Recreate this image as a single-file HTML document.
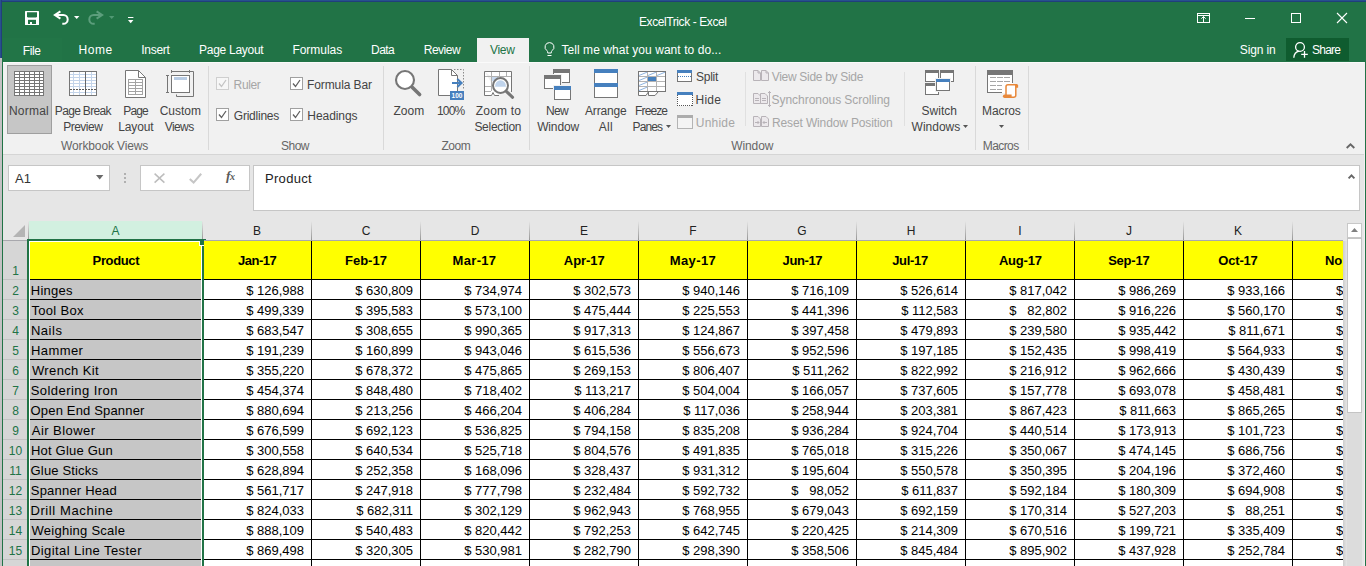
<!DOCTYPE html>
<html lang="en"><head><meta charset="utf-8"><title>ExcelTrick - Excel</title>
<style>
html,body{margin:0;padding:0;}
body{width:1366px;height:566px;overflow:hidden;position:relative;background:#217346;font-family:"Liberation Sans", sans-serif;}
.a{position:absolute;box-sizing:border-box;}
.t{white-space:pre;}
svg{overflow:visible;display:block;}
</style></head><body>
<div class="a" style="left:0px;top:0px;width:1366px;height:1px;background:#27508e;"></div>
<div class="a" style="left:0px;top:1px;width:1366px;height:1px;background:#203f7b;"></div>
<div class="a" style="left:0px;top:0px;width:1px;height:58px;background:#27508e;"></div>
<div class="a" style="left:1px;top:0px;width:1px;height:58px;background:#213f7c;"></div>
<div class="a" style="left:0px;top:58px;width:2px;height:508px;background:#c3c1c3;"></div>
<svg class="a" style="left:25px;top:11px;" width="14" height="14" viewBox="0 0 14 14"><rect x="0" y="0" width="14" height="14" rx="0.6" fill="#fff"/><path d="M2 1.2H12V5.6L11.2 6.5H2.8L2 5.6z" fill="#217346"/><rect x="3" y="8.8" width="8" height="4.2" fill="#217346"/><rect x="5" y="11" width="2" height="2" fill="#fff"/></svg>
<svg class="a" style="left:54px;top:11px;" width="15" height="14" viewBox="0 0 15 14"><path d="M6.4 0.4L0.9 4L6.4 7.6" fill="none" stroke="#fff" stroke-width="2" stroke-linejoin="miter"/><path d="M1.2 4H9.3A4.4 4.4 0 0 1 9.3 12.8H8.3" fill="none" stroke="#fff" stroke-width="2"/></svg>
<svg class="a" style="left:74px;top:16px;" width="6" height="3" viewBox="0 0 6 3"><path d="M0 0h5.4L2.7 3.1z" fill="#fff"/></svg>
<svg class="a" style="left:89px;top:11px;" width="15" height="14" viewBox="0 0 15 14"><path d="M7.6 0.4L13.1 4L7.6 7.6" fill="none" stroke="#5c9e7c" stroke-width="2"/><path d="M12.8 4H4.7A4.4 4.4 0 0 0 4.7 12.8H5.7" fill="none" stroke="#5c9e7c" stroke-width="2"/></svg>
<svg class="a" style="left:109px;top:16px;" width="6" height="3" viewBox="0 0 6 3"><path d="M0 0h5.4L2.7 3.1z" fill="#519873"/></svg>
<svg class="a" style="left:128px;top:17px;" width="6" height="7" viewBox="0 0 6 7"><rect x="0" y="0" width="5.4" height="1" fill="#fff"/><path d="M0 3h5.4L2.7 6.2z" fill="#fff"/></svg>
<div class="a t  fit" style="top:15px;font-size:12px;line-height:14px;color:#fff;letter-spacing:-0.41px;left:639.0px;">ExcelTrick - Excel</div>
<svg class="a" style="left:1197px;top:13px;" width="13" height="10" viewBox="0 0 13 10"><rect x="0.5" y="0.5" width="12" height="9" fill="none" stroke="#fff"/><path d="M0 2.5h13" stroke="#fff"/><path d="M6.5 9V3.5M4.3 5.7L6.5 3.5L8.7 5.7" fill="none" stroke="#fff"/></svg>
<div class="a" style="left:1245px;top:18px;width:10px;height:1px;background:#fff;"></div>
<svg class="a" style="left:1291px;top:13px;" width="10" height="10" viewBox="0 0 10 10"><rect x="0.5" y="0.5" width="9" height="9" fill="none" stroke="#fff"/></svg>
<svg class="a" style="left:1337px;top:13px;" width="10" height="10" viewBox="0 0 10 10"><path d="M0 0L10 10M10 0L0 10" stroke="#fff" stroke-width="1.1"/></svg>
<div class="a" style="left:3px;top:38px;width:59px;height:24px;background:#227547;"></div>
<div class="a t  fit" style="top:44px;font-size:12px;line-height:14px;color:#fff;letter-spacing:-0.37px;left:22.75px;">File</div>
<div class="a t  fit" style="top:43px;font-size:12px;line-height:14px;color:#fff;letter-spacing:0.53px;left:78.6px;">Home</div>
<div class="a t  fit" style="top:43px;font-size:12px;line-height:14px;color:#fff;letter-spacing:-0.28px;left:141.3px;">Insert</div>
<div class="a t  fit" style="top:43px;font-size:12px;line-height:14px;color:#fff;letter-spacing:-0.28px;left:199.1px;">Page Layout</div>
<div class="a t  fit" style="top:43px;font-size:12px;line-height:14px;color:#fff;letter-spacing:-0.04px;left:292.45px;">Formulas</div>
<div class="a t  fit" style="top:43px;font-size:12px;line-height:14px;color:#fff;letter-spacing:-0.6px;left:371.1px;">Data</div>
<div class="a t  fit" style="top:43px;font-size:12px;line-height:14px;color:#fff;letter-spacing:-0.5px;left:423.75px;">Review</div>
<div class="a" style="left:477px;top:38px;width:52px;height:25px;background:#f1f1f1;"></div>
<div class="a t  fit" style="top:43px;font-size:12px;line-height:14px;color:#217346;letter-spacing:-0.33px;left:490.0px;">View</div>
<svg class="a" style="left:544px;top:42px;" width="11" height="15" viewBox="0 0 11 15"><path d="M5.5 0.6a4.4 4.4 0 0 1 2.6 8c-0.6 0.5 -0.8 1 -0.8 2.4h-3.6c0 -1.4 -0.2 -1.9 -0.8 -2.4a4.4 4.4 0 0 1 2.6 -8z" fill="none" stroke="#fff" stroke-width="1"/><path d="M3.5 13.5h4" stroke="#fff" stroke-width="1"/></svg>
<div class="a t  fit" style="top:43px;font-size:12px;line-height:14px;color:#fff;letter-spacing:0.06px;left:561.45px;">Tell me what you want to do...</div>
<div class="a t  fit" style="top:43px;font-size:12px;line-height:14px;color:#fff;letter-spacing:-0.15px;left:1239.85px;">Sign in</div>
<div class="a" style="left:1286px;top:38px;width:63px;height:23px;background:#0f5c2f;"></div>
<svg class="a" style="left:1293px;top:42px;" width="15" height="16" viewBox="0 0 15 16"><circle cx="7" cy="5" r="4.4" fill="none" stroke="#fff" stroke-width="1.3"/><path d="M0.8 15.8C1 12.2 3 9.8 6.2 9.2" fill="none" stroke="#fff" stroke-width="1.3"/><path d="M11.5 9V15.8M8.2 12.4H14.8" stroke="#fff" stroke-width="1.3"/></svg>
<div class="a t  fit" style="top:43px;font-size:12px;line-height:14px;color:#fff;letter-spacing:-0.75px;left:1312.0px;">Share</div>
<div class="a" style="left:3px;top:62px;width:1362px;height:92px;background:#f1f1f1;"></div>
<div class="a" style="left:3px;top:62px;width:1362px;height:1px;background:#fafafa;"></div>
<div class="a" style="left:3px;top:154px;width:1362px;height:1px;background:#d5d5d5;"></div>
<div class="a" style="left:3px;top:155px;width:1362px;height:411px;background:#e6e6e6;"></div>
<div class="a" style="left:1364px;top:62px;width:1px;height:504px;background:#f3eff1;"></div>
<div class="a" style="left:8px;top:165px;width:102px;height:26px;background:#fff;border:1px solid #c6c6c6;"></div>
<div class="a t " style="top:171px;font-size:13px;line-height:15px;color:#333;left:15px;">A1</div>
<svg class="a" style="left:96px;top:175px;" width="8" height="5" viewBox="0 0 8 5"><path d="M0 0h7.4L3.7 4.4z" fill="#6a6a6a"/></svg>
<div class="a" style="left:124px;top:173px;width:2px;height:2px;background:#b0b0b0;"></div>
<div class="a" style="left:124px;top:177px;width:2px;height:2px;background:#b0b0b0;"></div>
<div class="a" style="left:124px;top:181px;width:2px;height:2px;background:#b0b0b0;"></div>
<div class="a" style="left:140px;top:165px;width:110px;height:26px;background:#fff;border:1px solid #c6c6c6;"></div>
<svg class="a" style="left:154px;top:173px;" width="11" height="10" viewBox="0 0 11 10"><path d="M0.6 0.6L10.4 9.6M10.4 0.6L0.6 9.6" stroke="#bdbdbd" stroke-width="1.5"/></svg>
<svg class="a" style="left:189px;top:173px;" width="13" height="11" viewBox="0 0 13 11"><path d="M0.8 6L4.6 9.6L12.2 0.8" fill="none" stroke="#c6c6c6" stroke-width="2.1"/></svg>
<div class="a t" style="left:226px;top:168px;font-family:'Liberation Serif',serif;font-style:italic;font-weight:bold;font-size:13.5px;line-height:16px;color:#5a5a5a;">f<span style="font-size:10px;margin-left:-0.5px;">x</span></div>
<div class="a" style="left:253px;top:165px;width:1107px;height:46px;background:#fff;border:1px solid #c6c6c6;"></div>
<div class="a t " style="top:171px;font-size:13px;line-height:15px;color:#222;letter-spacing:0.3px;left:265px;">Product</div>
<svg class="a" style="left:1348px;top:174px;" width="7" height="5" viewBox="0 0 7 5"><path d="M0.6 4.3L3.5 1.3L6.4 4.3" fill="none" stroke="#666" stroke-width="1.9"/></svg>
<svg class="a" style="left:1346px;top:143px;" width="9" height="6" viewBox="0 0 9 6"><path d="M0.7 5L4.5 1.3L8.3 5" fill="none" stroke="#666" stroke-width="1.9"/></svg>
<div class="a" style="left:208px;top:66px;width:1px;height:84px;background:#d9d9d9;"></div>
<div class="a" style="left:383px;top:66px;width:1px;height:84px;background:#d9d9d9;"></div>
<div class="a" style="left:529px;top:66px;width:1px;height:84px;background:#d9d9d9;"></div>
<div class="a" style="left:975px;top:66px;width:1px;height:84px;background:#d9d9d9;"></div>
<div class="a" style="left:1028px;top:66px;width:1px;height:84px;background:#d9d9d9;"></div>
<div class="a" style="left:745px;top:72px;width:1px;height:54px;background:#e0e0e0;"></div>
<div class="a" style="left:904px;top:72px;width:1px;height:54px;background:#e0e0e0;"></div>
<div class="a" style="left:7px;top:65px;width:45px;height:69px;background:#c6c6c6;border:1px solid #9f9f9f;"></div>
<svg class="a" style="left:14px;top:71px;" width="30" height="25" viewBox="0 0 30 25"><rect x="0" y="0" width="30" height="25" fill="#767676"/><rect x="1" y="1" width="4" height="2" fill="#fff"/><rect x="6" y="1" width="4" height="2" fill="#fff"/><rect x="11" y="1" width="4" height="2" fill="#fff"/><rect x="16" y="1" width="4" height="2" fill="#fff"/><rect x="21" y="1" width="4" height="2" fill="#fff"/><rect x="26" y="1" width="3" height="2" fill="#fff"/><rect x="1" y="4" width="4" height="2" fill="#fff"/><rect x="6" y="4" width="4" height="2" fill="#fff"/><rect x="11" y="4" width="4" height="2" fill="#fff"/><rect x="16" y="4" width="4" height="2" fill="#fff"/><rect x="21" y="4" width="4" height="2" fill="#fff"/><rect x="26" y="4" width="3" height="2" fill="#fff"/><rect x="1" y="7" width="4" height="2" fill="#fff"/><rect x="6" y="7" width="4" height="2" fill="#fff"/><rect x="11" y="7" width="4" height="2" fill="#fff"/><rect x="16" y="7" width="4" height="2" fill="#fff"/><rect x="21" y="7" width="4" height="2" fill="#fff"/><rect x="26" y="7" width="3" height="2" fill="#fff"/><rect x="1" y="10" width="4" height="2" fill="#fff"/><rect x="6" y="10" width="4" height="2" fill="#fff"/><rect x="11" y="10" width="4" height="2" fill="#fff"/><rect x="16" y="10" width="4" height="2" fill="#fff"/><rect x="21" y="10" width="4" height="2" fill="#fff"/><rect x="26" y="10" width="3" height="2" fill="#fff"/><rect x="1" y="13" width="4" height="2" fill="#fff"/><rect x="6" y="13" width="4" height="2" fill="#fff"/><rect x="11" y="13" width="4" height="2" fill="#fff"/><rect x="16" y="13" width="4" height="2" fill="#fff"/><rect x="21" y="13" width="4" height="2" fill="#fff"/><rect x="26" y="13" width="3" height="2" fill="#fff"/><rect x="1" y="16" width="4" height="2" fill="#fff"/><rect x="6" y="16" width="4" height="2" fill="#fff"/><rect x="11" y="16" width="4" height="2" fill="#fff"/><rect x="16" y="16" width="4" height="2" fill="#fff"/><rect x="21" y="16" width="4" height="2" fill="#fff"/><rect x="26" y="16" width="3" height="2" fill="#fff"/><rect x="1" y="19" width="4" height="2" fill="#fff"/><rect x="6" y="19" width="4" height="2" fill="#fff"/><rect x="11" y="19" width="4" height="2" fill="#fff"/><rect x="16" y="19" width="4" height="2" fill="#fff"/><rect x="21" y="19" width="4" height="2" fill="#fff"/><rect x="26" y="19" width="3" height="2" fill="#fff"/><rect x="1" y="22" width="4" height="2" fill="#fff"/><rect x="6" y="22" width="4" height="2" fill="#fff"/><rect x="11" y="22" width="4" height="2" fill="#fff"/><rect x="16" y="22" width="4" height="2" fill="#fff"/><rect x="21" y="22" width="4" height="2" fill="#fff"/><rect x="26" y="22" width="3" height="2" fill="#fff"/></svg>
<svg class="a" style="left:69px;top:71px;" width="28" height="25" viewBox="0 0 28 25"><rect x="0.5" y="0.5" width="27" height="24" fill="#fff" stroke="#767676"/><rect x="1" y="3" width="26" height="1" fill="#c3d4ea"/><rect x="1" y="6" width="26" height="1" fill="#c3d4ea"/><rect x="1" y="9" width="26" height="1" fill="#c3d4ea"/><rect x="1" y="12" width="26" height="1" fill="#c3d4ea"/><rect x="1" y="15" width="26" height="1" fill="#c3d4ea"/><rect x="1" y="21" width="26" height="1" fill="#c3d4ea"/><rect x="4" y="1" width="1" height="23" fill="#c3d4ea"/><rect x="10" y="1" width="1" height="23" fill="#c3d4ea"/><rect x="22" y="1" width="1" height="23" fill="#c3d4ea"/><rect x="16" y="1" width="1" height="23" fill="#666"/><path d="M1 18.5h26" stroke="#5a5a5a" stroke-width="1" stroke-dasharray="2 1"/></svg>
<svg class="a" style="left:125px;top:70px;" width="21" height="28" viewBox="0 0 21 28"><path d="M0.5 0.5H13.5L20.5 7.5V27.5H0.5z" fill="#fff" stroke="#767676"/><path d="M13.5 0.5V7.5H20.5" fill="none" stroke="#767676"/><rect x="3.5" y="9.5" width="14" height="15" fill="#fff" stroke="#a3a3a3"/><path d="M3.5 12.5h14" stroke="#a3a3a3"/><path d="M3.5 15.5h14" stroke="#a3a3a3"/><path d="M3.5 18.5h14" stroke="#a3a3a3"/><path d="M3.5 21.5h14" stroke="#a3a3a3"/><path d="M10.5 9.5v15" stroke="#a3a3a3"/></svg>
<svg class="a" style="left:167px;top:71px;" width="27" height="26" viewBox="0 0 27 26"><path d="M9.5 25.5V23.5M9.5 25.5H26.5V0.5H23" fill="none" stroke="#767676"/><rect x="4.5" y="4.5" width="18" height="17" fill="#fff" stroke="#767676"/><rect x="7" y="6" width="13" height="3" fill="#b8cce4"/><path d="M4.5 0.5H22.5M4.5 -1v3M22.5 -1v3" stroke="#767676" fill="none"/><path d="M0.5 4.5V21.5M-1 4.5h3M-1 21.5h3" stroke="#767676" fill="none"/></svg>
<div class="a t  fit" style="top:104px;font-size:12px;line-height:14px;color:#444;letter-spacing:0.24px;left:8.9px;">Normal</div>
<div class="a t  fit" style="top:104px;font-size:12px;line-height:14px;color:#444;letter-spacing:-0.68px;left:54.85px;">Page Break</div>
<div class="a t  fit" style="top:120px;font-size:12px;line-height:14px;color:#444;letter-spacing:-0.5px;left:63.2px;">Preview</div>
<div class="a t  fit" style="top:104px;font-size:12px;line-height:14px;color:#444;letter-spacing:-0.9px;left:123.3px;">Page</div>
<div class="a t  fit" style="top:120px;font-size:12px;line-height:14px;color:#444;letter-spacing:-0.12px;left:118.2px;">Layout</div>
<div class="a t  fit" style="top:104px;font-size:12px;line-height:14px;color:#444;letter-spacing:-0.02px;left:159.65px;">Custom</div>
<div class="a t  fit" style="top:120px;font-size:12px;line-height:14px;color:#444;letter-spacing:-0.6px;left:164.8px;">Views</div>
<div class="a t  fit" style="top:139px;font-size:12px;line-height:14px;color:#666;letter-spacing:-0.13px;left:61.05px;">Workbook Views</div>
<svg class="a" style="left:216px;top:77px;" width="13" height="13" viewBox="0 0 13 13"><rect x="0.5" y="0.5" width="12" height="12" fill="#f7f7f7" stroke="#cfcfcf"/><path d="M3 6.5L5.5 9.5L10 3" fill="none" stroke="#c4c4c4" stroke-width="1.3"/></svg>
<svg class="a" style="left:290px;top:77px;" width="13" height="13" viewBox="0 0 13 13"><rect x="0.5" y="0.5" width="12" height="12" fill="#fff" stroke="#a0a0a0"/><path d="M3 6.5L5.5 9.5L10 3" fill="none" stroke="#606060" stroke-width="1.3"/></svg>
<svg class="a" style="left:216px;top:108px;" width="13" height="13" viewBox="0 0 13 13"><rect x="0.5" y="0.5" width="12" height="12" fill="#fff" stroke="#a0a0a0"/><path d="M3 6.5L5.5 9.5L10 3" fill="none" stroke="#606060" stroke-width="1.3"/></svg>
<svg class="a" style="left:290px;top:108px;" width="13" height="13" viewBox="0 0 13 13"><rect x="0.5" y="0.5" width="12" height="12" fill="#fff" stroke="#a0a0a0"/><path d="M3 6.5L5.5 9.5L10 3" fill="none" stroke="#606060" stroke-width="1.3"/></svg>
<div class="a t  fit" style="top:78px;font-size:12px;line-height:14px;color:#a6a6a6;letter-spacing:-0.35px;left:233.6px;">Ruler</div>
<div class="a t  fit" style="top:78px;font-size:12px;line-height:14px;color:#444;letter-spacing:-0.1px;left:307.0px;">Formula Bar</div>
<div class="a t  fit" style="top:109px;font-size:12px;line-height:14px;color:#444;letter-spacing:-0.24px;left:233.85px;">Gridlines</div>
<div class="a t  fit" style="top:109px;font-size:12px;line-height:14px;color:#444;letter-spacing:-0.06px;left:307.3px;">Headings</div>
<div class="a t  fit" style="top:139px;font-size:12px;line-height:14px;color:#666;letter-spacing:-0.47px;left:280.9px;">Show</div>
<svg class="a" style="left:395px;top:70px;" width="28" height="28" viewBox="0 0 28 28"><circle cx="10" cy="10" r="9" fill="#fff" stroke="#767676" stroke-width="2.1"/><path d="M17.2 17.2L24.6 24.6" stroke="#767676" stroke-width="3.6" stroke-linecap="round"/></svg>
<svg class="a" style="left:438px;top:69px;" width="27" height="31" viewBox="0 0 27 31"><path d="M0.5 0.5H13.5L19.5 6.5V26.5H0.5z" fill="#fff" stroke="#767676"/><path d="M13.5 0.5V6.5H19.5" fill="none" stroke="#767676"/><path d="M16 0.5H25.5V21" fill="none" stroke="#8a8a8a" stroke-dasharray="1.5 1.5"/><path d="M14 14H23.5M19.3 10L23.6 14L19.3 18" fill="none" stroke="#4680be" stroke-width="2"/><rect x="12" y="22" width="14" height="9" fill="#4680be"/><text x="19" y="29.2" font-family="Liberation Sans, sans-serif" font-size="6.5" font-weight="bold" fill="#fff" text-anchor="middle">100</text></svg>
<svg class="a" style="left:484px;top:71px;" width="30" height="28" viewBox="0 0 30 28"><path d="M0.5 0.5H27.5V21M0.5 0.5V24.5H7.5L9 21.5L10.5 24.5H15" fill="#fff" stroke="#767676"/><path d="M1 5.5H27M1 15.5H7M1 20.5H7M7.5 1V20M15.5 1V5M22.5 1V5" fill="none" stroke="#b0b0b0"/><path d="M8 6h6v4h-6z" fill="#c7d8ee"/><circle cx="16.5" cy="14.5" r="7.5" fill="#fff" stroke="#767676" stroke-width="2"/><path d="M11 15.7a5.5 6.5 0 0 1 11 0z" fill="#c0d4ec"/><path d="M22.3 20.3L28.6 26.3" stroke="#767676" stroke-width="3" stroke-linecap="round"/></svg>
<div class="a t  fit" style="top:104px;font-size:12px;line-height:14px;color:#444;letter-spacing:-0.03px;left:393.55px;">Zoom</div>
<div class="a t  fit" style="top:104px;font-size:12px;line-height:14px;color:#444;letter-spacing:-0.9px;left:437.1px;">100%</div>
<div class="a t  fit" style="top:104px;font-size:12px;line-height:14px;color:#444;letter-spacing:0.18px;left:475.85px;">Zoom to</div>
<div class="a t  fit" style="top:120px;font-size:12px;line-height:14px;color:#444;letter-spacing:-0.28px;left:474.4px;">Selection</div>
<div class="a t  fit" style="top:139px;font-size:12px;line-height:14px;color:#666;letter-spacing:-0.43px;left:441.45px;">Zoom</div>
<svg class="a" style="left:544px;top:69px;" width="28" height="31" viewBox="0 0 28 31"><rect x="9.5" y="0.5" width="16" height="13" fill="#fff" stroke="#767676"/><rect x="9" y="0" width="17" height="4" fill="#767676"/><rect x="-1" y="5" width="19" height="16" fill="#f1f1f1"/><rect x="0.5" y="6.5" width="16" height="13" fill="#fff" stroke="#767676"/><rect x="0" y="6" width="17" height="4" fill="#767676"/><rect x="9" y="16" width="19" height="16" fill="#f1f1f1"/><rect x="10.5" y="17.5" width="16" height="13" fill="#fff" stroke="#767676"/><rect x="10" y="17" width="17" height="4" fill="#4680be"/></svg>
<svg class="a" style="left:594px;top:69px;" width="24" height="29" viewBox="0 0 24 29"><rect x="0.5" y="0.5" width="23" height="28" fill="#fff" stroke="#767676"/><rect x="0" y="0" width="24" height="4" fill="#4680be"/><rect x="0" y="14" width="24" height="4" fill="#4680be"/></svg>
<svg class="a" style="left:638px;top:71px;" width="28" height="25" viewBox="0 0 28 25"><path d="M0.5 20.5V24.5H8L10.3 21M10.5 21V24.5H17L20 21" fill="#fff" stroke="#767676"/><rect x="0.5" y="0.5" width="27" height="20" fill="#fff" stroke="#767676"/><path d="M1 5.5H27M1 10.5H27M1 15.5H27M9.5 1V20M18.5 1V20" fill="none" stroke="#b4b4b4"/><path d="M1 4.5L9 1.2M10 4.5L18 1.2M19 4.5L27 1.2M1 9.5L9 6.2M1 14.5L9 11.2M1 19.5L9 16.2" stroke="#8fb4e0" fill="none" stroke-width="1"/><rect x="10" y="6" width="8" height="4" fill="#4680be"/></svg>
<div class="a t  fit" style="top:104px;font-size:12px;line-height:14px;color:#444;letter-spacing:-0.7px;left:546.0px;">New</div>
<div class="a t  fit" style="top:120px;font-size:12px;line-height:14px;color:#444;letter-spacing:-0.14px;left:537.15px;">Window</div>
<div class="a t  fit" style="top:104px;font-size:12px;line-height:14px;color:#444;letter-spacing:-0.17px;left:585.0px;">Arrange</div>
<div class="a t  fit" style="top:120px;font-size:12px;line-height:14px;color:#444;letter-spacing:0.25px;left:598.75px;">All</div>
<div class="a t  fit" style="top:104px;font-size:12px;line-height:14px;color:#444;letter-spacing:-0.88px;left:635.1px;">Freeze</div>
<div class="a t  fit" style="top:120px;font-size:12px;line-height:14px;color:#444;letter-spacing:-0.9px;left:632.6px;">Panes</div>
<svg class="a" style="left:666px;top:125px;" width="5" height="3" viewBox="0 0 5 3"><path d="M0 0h5L2.5 3z" fill="#555"/></svg>
<svg class="a" style="left:677px;top:70px;" width="15" height="12" viewBox="0 0 15 12"><rect x="0.5" y="0.5" width="14" height="11" fill="#fff" stroke="#767676"/><rect x="0" y="0" width="15" height="3" fill="#4680be"/><path d="M1 6.5h13" stroke="#4680be" stroke-dasharray="1 1"/></svg>
<svg class="a" style="left:677px;top:92px;" width="16" height="14" viewBox="0 0 16 14"><rect x="0" y="0" width="16" height="14" fill="#fff"/><path d="M0.5 3V14M15.5 3V14M0 13.5H16" fill="none" stroke="#555" stroke-dasharray="1 1"/><rect x="0" y="0" width="16" height="3" fill="#4680be"/></svg>
<svg class="a" style="left:677px;top:115px;" width="16" height="14" viewBox="0 0 16 14"><rect x="0.5" y="0.5" width="15" height="13" fill="#f4f4f4" stroke="#b4b4b4"/><rect x="0" y="0" width="16" height="3" fill="#acacac"/></svg>
<div class="a t  fit" style="top:70px;font-size:12px;line-height:14px;color:#444;letter-spacing:-0.25px;left:696.0px;">Split</div>
<div class="a t  fit" style="top:93px;font-size:12px;line-height:14px;color:#444;letter-spacing:0.2px;left:695.6px;">Hide</div>
<div class="a t  fit" style="top:116px;font-size:12px;line-height:14px;color:#a6a6a6;letter-spacing:0.2px;left:695.8px;">Unhide</div>
<svg class="a" style="left:753px;top:70px;" width="16" height="11" viewBox="0 0 16 11"><path d="M0.5 0.5H5L7.5 3V10.5H0.5zM8.5 0.5H13L15.5 3V10.5H8.5z" fill="#ece9ec" stroke="#b8b3b8"/><path d="M5 0.5V3H7.5M13 0.5V3H15.5" fill="none" stroke="#b8b3b8"/></svg>
<svg class="a" style="left:753px;top:91px;" width="18" height="16" viewBox="0 0 18 16"><path d="M0.5 2.5H5L7.5 5V12.5H0.5zM7.5 2.5H12L14.5 5V12.5H7.5z" fill="#ece9ec" stroke="#b8b3b8"/><path d="M2 7.5h4M2 9.5h4M9 7.5h4M9 9.5h4" stroke="#b8b3b8"/><path d="M16.5 0V16M15 2L16.5 0.5L18 2M15 14L16.5 15.5L18 14" fill="none" stroke="#b8b3b8"/></svg>
<svg class="a" style="left:753px;top:116px;" width="16" height="11" viewBox="0 0 16 11"><path d="M0.5 0.5H5L7.5 3V10.5H0.5zM8.5 0.5H13L15.5 3V10.5H8.5z" fill="#ece9ec" stroke="#b8b3b8"/><path d="M2 6.5h4M4.5 5l1.5 1.5L4.5 8M14 6.5h-4M11.5 5L10 6.5L11.5 8" fill="none" stroke="#b8b3b8"/></svg>
<div class="a t  fit" style="top:70px;font-size:12px;line-height:14px;color:#a6a6a6;letter-spacing:-0.3px;left:771.7px;">View Side by Side</div>
<div class="a t  fit" style="top:93px;font-size:12px;line-height:14px;color:#a6a6a6;letter-spacing:-0.05px;left:771.6px;">Synchronous Scrolling</div>
<div class="a t  fit" style="top:116px;font-size:12px;line-height:14px;color:#a6a6a6;letter-spacing:-0.14px;left:772.05px;">Reset Window Position</div>
<svg class="a" style="left:925px;top:70px;" width="30" height="26" viewBox="0 0 30 26"><rect x="0.5" y="0.5" width="13" height="11" fill="#fff" stroke="#767676"/><rect x="0" y="0" width="14" height="3" fill="#767676"/><rect x="15.5" y="0.5" width="13" height="11" fill="#fff" stroke="#767676"/><rect x="15" y="0" width="14" height="3" fill="#767676"/><rect x="0.5" y="13.5" width="13" height="11" fill="#fff" stroke="#767676"/><rect x="0" y="13" width="14" height="3" fill="#767676"/><rect x="10" y="8" width="16" height="14" fill="#f1f1f1"/><rect x="11.5" y="9.5" width="13" height="11" fill="#fff" stroke="#767676"/><rect x="11" y="9" width="14" height="3" fill="#4680be"/></svg>
<div class="a t  fit" style="top:104px;font-size:12px;line-height:14px;color:#444;left:921.6px;">Switch</div>
<div class="a t  fit" style="top:120px;font-size:12px;line-height:14px;color:#444;left:911.6px;">Windows</div>
<svg class="a" style="left:963px;top:125px;" width="5" height="3" viewBox="0 0 5 3"><path d="M0 0h5L2.5 3z" fill="#555"/></svg>
<div class="a t  fit" style="top:139px;font-size:12px;line-height:14px;color:#666;letter-spacing:-0.1px;left:731.25px;">Window</div>
<svg class="a" style="left:987px;top:70px;" width="32" height="28" viewBox="0 0 32 28"><rect x="0.5" y="0.5" width="25" height="22" fill="#fff" stroke="#767676"/><rect x="0" y="0" width="26" height="5" fill="#767676"/><path d="M3 7.5h6M10 7.5h6M17 7.5h6" stroke="#a6a6a6"/><path d="M3 11.5h6M10 11.5h6M17 11.5h6" stroke="#a6a6a6"/><path d="M3 15.5h6M10 15.5h6M17 15.5h6" stroke="#a6a6a6"/><path d="M3 19.5h6M10 19.5h6M17 19.5h6" stroke="#a6a6a6"/><rect x="15" y="13" width="17" height="16" fill="#f1f1f1"/><rect x="15" y="13" width="11" height="10" fill="#fff"/><path d="M19 25V16.7Q19 14.7 21 14.7H28.8V25.3Q28.8 27.3 26.6 27.3H18" fill="#fff" stroke="#e8883a" stroke-width="1.5"/><path d="M28.6 14h1a1.5 1.5 0 0 1 1.5 1.5v2.3h-2.5z" fill="#e8883a"/><path d="M17.6 24.6H24.6v3.4H17.6a1.7 1.7 0 0 1 0 -3.4z" fill="#e8883a"/></svg>
<div class="a t  fit" style="top:104px;font-size:12px;line-height:14px;color:#444;letter-spacing:-0.12px;left:982.1px;">Macros</div>
<svg class="a" style="left:999px;top:125px;" width="5" height="3" viewBox="0 0 5 3"><path d="M0 0h5L2.5 3z" fill="#555"/></svg>
<div class="a t  fit" style="top:139px;font-size:12px;line-height:14px;color:#666;letter-spacing:-0.6px;left:982.8px;">Macros</div>
<div class="a" style="left:29px;top:241px;width:1314px;height:325px;background:#fff;"></div>
<div class="a" style="left:29px;top:241px;width:1314px;height:38px;background:#ffff00;"></div>
<div class="a" style="left:30px;top:280px;width:171px;height:286px;background:#c6c6c6;"></div>
<div class="a" style="left:30px;top:279px;width:1313px;height:1px;background:#000;"></div>
<div class="a" style="left:30px;top:299px;width:1313px;height:1px;background:#000;"></div>
<div class="a" style="left:30px;top:319px;width:1313px;height:1px;background:#000;"></div>
<div class="a" style="left:30px;top:339px;width:1313px;height:1px;background:#000;"></div>
<div class="a" style="left:30px;top:359px;width:1313px;height:1px;background:#000;"></div>
<div class="a" style="left:30px;top:379px;width:1313px;height:1px;background:#000;"></div>
<div class="a" style="left:30px;top:399px;width:1313px;height:1px;background:#000;"></div>
<div class="a" style="left:30px;top:419px;width:1313px;height:1px;background:#000;"></div>
<div class="a" style="left:30px;top:439px;width:1313px;height:1px;background:#000;"></div>
<div class="a" style="left:30px;top:459px;width:1313px;height:1px;background:#000;"></div>
<div class="a" style="left:30px;top:479px;width:1313px;height:1px;background:#000;"></div>
<div class="a" style="left:30px;top:499px;width:1313px;height:1px;background:#000;"></div>
<div class="a" style="left:30px;top:519px;width:1313px;height:1px;background:#000;"></div>
<div class="a" style="left:30px;top:539px;width:1313px;height:1px;background:#000;"></div>
<div class="a" style="left:30px;top:559px;width:1313px;height:1px;background:#000;"></div>
<div class="a" style="left:311px;top:241px;width:1px;height:325px;background:#000;"></div>
<div class="a" style="left:420px;top:241px;width:1px;height:325px;background:#000;"></div>
<div class="a" style="left:529px;top:241px;width:1px;height:325px;background:#000;"></div>
<div class="a" style="left:638px;top:241px;width:1px;height:325px;background:#000;"></div>
<div class="a" style="left:747px;top:241px;width:1px;height:325px;background:#000;"></div>
<div class="a" style="left:856px;top:241px;width:1px;height:325px;background:#000;"></div>
<div class="a" style="left:965px;top:241px;width:1px;height:325px;background:#000;"></div>
<div class="a" style="left:1074px;top:241px;width:1px;height:325px;background:#000;"></div>
<div class="a" style="left:1183px;top:241px;width:1px;height:325px;background:#000;"></div>
<div class="a" style="left:1292px;top:241px;width:1px;height:325px;background:#000;"></div>
<div class="a" style="left:29px;top:221px;width:173px;height:18px;background:#d2f0e0;"></div>
<div class="a" style="left:3px;top:240px;width:1340px;height:1px;background:#a8a8ad;"></div>
<div class="a" style="left:28px;top:221px;width:1px;height:19px;background:linear-gradient(to bottom,rgba(150,150,150,0) 0%,rgba(150,150,150,1) 100%);"></div>
<div class="a" style="left:202px;top:221px;width:1px;height:19px;background:linear-gradient(to bottom,rgba(150,150,150,0) 0%,rgba(150,150,150,1) 100%);"></div>
<div class="a" style="left:311px;top:221px;width:1px;height:19px;background:linear-gradient(to bottom,rgba(150,150,150,0) 0%,rgba(150,150,150,1) 100%);"></div>
<div class="a" style="left:420px;top:221px;width:1px;height:19px;background:linear-gradient(to bottom,rgba(150,150,150,0) 0%,rgba(150,150,150,1) 100%);"></div>
<div class="a" style="left:529px;top:221px;width:1px;height:19px;background:linear-gradient(to bottom,rgba(150,150,150,0) 0%,rgba(150,150,150,1) 100%);"></div>
<div class="a" style="left:638px;top:221px;width:1px;height:19px;background:linear-gradient(to bottom,rgba(150,150,150,0) 0%,rgba(150,150,150,1) 100%);"></div>
<div class="a" style="left:747px;top:221px;width:1px;height:19px;background:linear-gradient(to bottom,rgba(150,150,150,0) 0%,rgba(150,150,150,1) 100%);"></div>
<div class="a" style="left:856px;top:221px;width:1px;height:19px;background:linear-gradient(to bottom,rgba(150,150,150,0) 0%,rgba(150,150,150,1) 100%);"></div>
<div class="a" style="left:965px;top:221px;width:1px;height:19px;background:linear-gradient(to bottom,rgba(150,150,150,0) 0%,rgba(150,150,150,1) 100%);"></div>
<div class="a" style="left:1074px;top:221px;width:1px;height:19px;background:linear-gradient(to bottom,rgba(150,150,150,0) 0%,rgba(150,150,150,1) 100%);"></div>
<div class="a" style="left:1183px;top:221px;width:1px;height:19px;background:linear-gradient(to bottom,rgba(150,150,150,0) 0%,rgba(150,150,150,1) 100%);"></div>
<div class="a" style="left:1292px;top:221px;width:1px;height:19px;background:linear-gradient(to bottom,rgba(150,150,150,0) 0%,rgba(150,150,150,1) 100%);"></div>
<div class="a" style="left:3px;top:241px;width:24px;height:325px;background:#d6d6d6;"></div>
<div class="a" style="left:3px;top:279px;width:24px;height:1px;background:#c2c2c2;"></div>
<div class="a" style="left:3px;top:299px;width:24px;height:1px;background:#c2c2c2;"></div>
<div class="a" style="left:3px;top:319px;width:24px;height:1px;background:#c2c2c2;"></div>
<div class="a" style="left:3px;top:339px;width:24px;height:1px;background:#c2c2c2;"></div>
<div class="a" style="left:3px;top:359px;width:24px;height:1px;background:#c2c2c2;"></div>
<div class="a" style="left:3px;top:379px;width:24px;height:1px;background:#c2c2c2;"></div>
<div class="a" style="left:3px;top:399px;width:24px;height:1px;background:#c2c2c2;"></div>
<div class="a" style="left:3px;top:419px;width:24px;height:1px;background:#c2c2c2;"></div>
<div class="a" style="left:3px;top:439px;width:24px;height:1px;background:#c2c2c2;"></div>
<div class="a" style="left:3px;top:459px;width:24px;height:1px;background:#c2c2c2;"></div>
<div class="a" style="left:3px;top:479px;width:24px;height:1px;background:#c2c2c2;"></div>
<div class="a" style="left:3px;top:499px;width:24px;height:1px;background:#c2c2c2;"></div>
<div class="a" style="left:3px;top:519px;width:24px;height:1px;background:#c2c2c2;"></div>
<div class="a" style="left:3px;top:539px;width:24px;height:1px;background:#c2c2c2;"></div>
<div class="a" style="left:3px;top:559px;width:24px;height:1px;background:#c2c2c2;"></div>
<svg class="a" style="left:13px;top:225px;" width="12" height="12" viewBox="0 0 12 12"><path d="M12 0V12H0z" fill="#b4b4b4"/></svg>
<div class="a" style="left:27px;top:239px;width:177px;height:2px;background:#217346;"></div>
<div class="a" style="left:27px;top:239px;width:2px;height:327px;background:#217346;"></div>
<div class="a" style="left:202px;top:246px;width:2px;height:320px;background:#217346;"></div>
<div class="a" style="left:29px;top:241px;width:172px;height:1px;background:#fff;"></div>
<div class="a" style="left:29px;top:241px;width:1px;height:325px;background:#fff;"></div>
<div class="a" style="left:201px;top:241px;width:1px;height:325px;background:#fff;"></div>
<div class="a" style="left:199px;top:239px;width:7px;height:7px;background:#fff;"></div>
<div class="a" style="left:199px;top:239px;width:7px;height:2px;background:#217346;"></div>
<div class="a" style="left:200px;top:240px;width:5px;height:5px;background:#217346;"></div>
<div class="a" style="left:204px;top:240px;width:2px;height:1px;background:#a8a8ad;"></div>
<div class="a" style="left:204px;top:241px;width:2px;height:5px;background:#ffff00;"></div>
<div class="a t " style="top:224px;font-size:12px;line-height:14px;color:#217346;left:-84.5px;width:400px;text-align:center;">A</div>
<div class="a t " style="top:224px;font-size:12px;line-height:14px;color:#222;left:57.0px;width:400px;text-align:center;">B</div>
<div class="a t " style="top:224px;font-size:12px;line-height:14px;color:#222;left:166.0px;width:400px;text-align:center;">C</div>
<div class="a t " style="top:224px;font-size:12px;line-height:14px;color:#222;left:275.0px;width:400px;text-align:center;">D</div>
<div class="a t " style="top:224px;font-size:12px;line-height:14px;color:#222;left:384.0px;width:400px;text-align:center;">E</div>
<div class="a t " style="top:224px;font-size:12px;line-height:14px;color:#222;left:493.0px;width:400px;text-align:center;">F</div>
<div class="a t " style="top:224px;font-size:12px;line-height:14px;color:#222;left:602.0px;width:400px;text-align:center;">G</div>
<div class="a t " style="top:224px;font-size:12px;line-height:14px;color:#222;left:711.0px;width:400px;text-align:center;">H</div>
<div class="a t " style="top:224px;font-size:12px;line-height:14px;color:#222;left:820.0px;width:400px;text-align:center;">I</div>
<div class="a t " style="top:224px;font-size:12px;line-height:14px;color:#222;left:929.0px;width:400px;text-align:center;">J</div>
<div class="a t " style="top:224px;font-size:12px;line-height:14px;color:#222;left:1038.0px;width:400px;text-align:center;">K</div>
<div class="a t " style="top:264px;font-size:12px;line-height:14px;color:#217346;left:-184.5px;width:400px;text-align:center;">1</div>
<div class="a t " style="top:284px;font-size:12px;line-height:14px;color:#217346;left:-184.5px;width:400px;text-align:center;">2</div>
<div class="a t " style="top:304px;font-size:12px;line-height:14px;color:#217346;left:-184.5px;width:400px;text-align:center;">3</div>
<div class="a t " style="top:324px;font-size:12px;line-height:14px;color:#217346;left:-184.5px;width:400px;text-align:center;">4</div>
<div class="a t " style="top:344px;font-size:12px;line-height:14px;color:#217346;left:-184.5px;width:400px;text-align:center;">5</div>
<div class="a t " style="top:364px;font-size:12px;line-height:14px;color:#217346;left:-184.5px;width:400px;text-align:center;">6</div>
<div class="a t " style="top:384px;font-size:12px;line-height:14px;color:#217346;left:-184.5px;width:400px;text-align:center;">7</div>
<div class="a t " style="top:404px;font-size:12px;line-height:14px;color:#217346;left:-184.5px;width:400px;text-align:center;">8</div>
<div class="a t " style="top:424px;font-size:12px;line-height:14px;color:#217346;left:-184.5px;width:400px;text-align:center;">9</div>
<div class="a t " style="top:444px;font-size:12px;line-height:14px;color:#217346;left:-184.5px;width:400px;text-align:center;">10</div>
<div class="a t " style="top:464px;font-size:12px;line-height:14px;color:#217346;left:-184.5px;width:400px;text-align:center;">11</div>
<div class="a t " style="top:484px;font-size:12px;line-height:14px;color:#217346;left:-184.5px;width:400px;text-align:center;">12</div>
<div class="a t " style="top:504px;font-size:12px;line-height:14px;color:#217346;left:-184.5px;width:400px;text-align:center;">13</div>
<div class="a t " style="top:524px;font-size:12px;line-height:14px;color:#217346;left:-184.5px;width:400px;text-align:center;">14</div>
<div class="a t " style="top:544px;font-size:12px;line-height:14px;color:#217346;left:-184.5px;width:400px;text-align:center;">15</div>
<div class="a t  fit" style="top:253px;font-size:13px;line-height:15px;color:#000;letter-spacing:-0.37px;font-weight:bold;left:92.6px;">Product</div>
<div class="a t  fit" style="top:253px;font-size:13px;line-height:15px;color:#000;letter-spacing:-0.48px;font-weight:bold;left:238.0px;">Jan-17</div>
<div class="a t  fit" style="top:253px;font-size:13px;line-height:15px;color:#000;font-weight:bold;left:345.0px;">Feb-17</div>
<div class="a t  fit" style="top:253px;font-size:13px;line-height:15px;color:#000;letter-spacing:0.32px;font-weight:bold;left:452.6px;">Mar-17</div>
<div class="a t  fit" style="top:253px;font-size:13px;line-height:15px;color:#000;letter-spacing:-0.06px;font-weight:bold;left:563.85px;">Apr-17</div>
<div class="a t  fit" style="top:253px;font-size:13px;line-height:15px;color:#000;letter-spacing:0.42px;font-weight:bold;left:669.65px;">May-17</div>
<div class="a t  fit" style="top:253px;font-size:13px;line-height:15px;color:#000;letter-spacing:-0.4px;font-weight:bold;left:782.6px;">Jun-17</div>
<div class="a t  fit" style="top:253px;font-size:13px;line-height:15px;color:#000;letter-spacing:-0.3px;font-weight:bold;left:892.15px;">Jul-17</div>
<div class="a t  fit" style="top:253px;font-size:13px;line-height:15px;color:#000;letter-spacing:-0.22px;font-weight:bold;left:998.95px;">Aug-17</div>
<div class="a t  fit" style="top:253px;font-size:13px;line-height:15px;color:#000;letter-spacing:-0.22px;font-weight:bold;left:1108.15px;">Sep-17</div>
<div class="a t  fit" style="top:253px;font-size:13px;line-height:15px;color:#000;letter-spacing:-0.18px;font-weight:bold;left:1218.25px;">Oct-17</div>
<div class="a" style="left:1293px;top:241px;width:49px;height:38px;overflow:hidden;"><div class="a t" style="left:32px;top:12px;font-size:13px;line-height:15px;font-weight:bold;letter-spacing:-0.2px;color:#000;">Nov-17</div></div>
<div class="a t  fit" style="top:283px;font-size:13px;line-height:15px;color:#000;letter-spacing:0.22px;left:30.85px;">Hinges</div>
<div class="a t " style="top:283px;font-size:13px;line-height:15px;color:#000;left:-96px;width:400px;text-align:right;">$ 126,988</div>
<div class="a t " style="top:283px;font-size:13px;line-height:15px;color:#000;left:13px;width:400px;text-align:right;">$ 630,809</div>
<div class="a t " style="top:283px;font-size:13px;line-height:15px;color:#000;left:122px;width:400px;text-align:right;">$ 734,974</div>
<div class="a t " style="top:283px;font-size:13px;line-height:15px;color:#000;left:231px;width:400px;text-align:right;">$ 302,573</div>
<div class="a t " style="top:283px;font-size:13px;line-height:15px;color:#000;left:340px;width:400px;text-align:right;">$ 940,146</div>
<div class="a t " style="top:283px;font-size:13px;line-height:15px;color:#000;left:449px;width:400px;text-align:right;">$ 716,109</div>
<div class="a t " style="top:283px;font-size:13px;line-height:15px;color:#000;left:558px;width:400px;text-align:right;">$ 526,614</div>
<div class="a t " style="top:283px;font-size:13px;line-height:15px;color:#000;left:667px;width:400px;text-align:right;">$ 817,042</div>
<div class="a t " style="top:283px;font-size:13px;line-height:15px;color:#000;left:776px;width:400px;text-align:right;">$ 986,269</div>
<div class="a t " style="top:283px;font-size:13px;line-height:15px;color:#000;left:885px;width:400px;text-align:right;">$ 933,166</div>
<div class="a" style="left:1293px;top:280px;width:50px;height:19px;overflow:hidden;"><div class="a t" style="left:43px;top:3px;font-size:13px;line-height:15px;color:#000;">$ 1</div></div>
<div class="a t  fit" style="top:303px;font-size:13px;line-height:15px;color:#000;letter-spacing:0.31px;left:31.4px;">Tool Box</div>
<div class="a t " style="top:303px;font-size:13px;line-height:15px;color:#000;left:-96px;width:400px;text-align:right;">$ 499,339</div>
<div class="a t " style="top:303px;font-size:13px;line-height:15px;color:#000;left:13px;width:400px;text-align:right;">$ 395,583</div>
<div class="a t " style="top:303px;font-size:13px;line-height:15px;color:#000;left:122px;width:400px;text-align:right;">$ 573,100</div>
<div class="a t " style="top:303px;font-size:13px;line-height:15px;color:#000;left:231px;width:400px;text-align:right;">$ 475,444</div>
<div class="a t " style="top:303px;font-size:13px;line-height:15px;color:#000;left:340px;width:400px;text-align:right;">$ 225,553</div>
<div class="a t " style="top:303px;font-size:13px;line-height:15px;color:#000;left:449px;width:400px;text-align:right;">$ 441,396</div>
<div class="a t " style="top:303px;font-size:13px;line-height:15px;color:#000;left:558px;width:400px;text-align:right;">$ 112,583</div>
<div class="a t " style="top:303px;font-size:13px;line-height:15px;color:#000;left:667px;width:400px;text-align:right;">$   82,802</div>
<div class="a t " style="top:303px;font-size:13px;line-height:15px;color:#000;left:776px;width:400px;text-align:right;">$ 916,226</div>
<div class="a t " style="top:303px;font-size:13px;line-height:15px;color:#000;left:885px;width:400px;text-align:right;">$ 560,170</div>
<div class="a" style="left:1293px;top:300px;width:50px;height:19px;overflow:hidden;"><div class="a t" style="left:43px;top:3px;font-size:13px;line-height:15px;color:#000;">$ 1</div></div>
<div class="a t  fit" style="top:323px;font-size:13px;line-height:15px;color:#000;letter-spacing:0.55px;left:30.9px;">Nails</div>
<div class="a t " style="top:323px;font-size:13px;line-height:15px;color:#000;left:-96px;width:400px;text-align:right;">$ 683,547</div>
<div class="a t " style="top:323px;font-size:13px;line-height:15px;color:#000;left:13px;width:400px;text-align:right;">$ 308,655</div>
<div class="a t " style="top:323px;font-size:13px;line-height:15px;color:#000;left:122px;width:400px;text-align:right;">$ 990,365</div>
<div class="a t " style="top:323px;font-size:13px;line-height:15px;color:#000;left:231px;width:400px;text-align:right;">$ 917,313</div>
<div class="a t " style="top:323px;font-size:13px;line-height:15px;color:#000;left:340px;width:400px;text-align:right;">$ 124,867</div>
<div class="a t " style="top:323px;font-size:13px;line-height:15px;color:#000;left:449px;width:400px;text-align:right;">$ 397,458</div>
<div class="a t " style="top:323px;font-size:13px;line-height:15px;color:#000;left:558px;width:400px;text-align:right;">$ 479,893</div>
<div class="a t " style="top:323px;font-size:13px;line-height:15px;color:#000;left:667px;width:400px;text-align:right;">$ 239,580</div>
<div class="a t " style="top:323px;font-size:13px;line-height:15px;color:#000;left:776px;width:400px;text-align:right;">$ 935,442</div>
<div class="a t " style="top:323px;font-size:13px;line-height:15px;color:#000;left:885px;width:400px;text-align:right;">$ 811,671</div>
<div class="a" style="left:1293px;top:320px;width:50px;height:19px;overflow:hidden;"><div class="a t" style="left:43px;top:3px;font-size:13px;line-height:15px;color:#000;">$ 1</div></div>
<div class="a t  fit" style="top:343px;font-size:13px;line-height:15px;color:#000;letter-spacing:0.44px;left:30.9px;">Hammer</div>
<div class="a t " style="top:343px;font-size:13px;line-height:15px;color:#000;left:-96px;width:400px;text-align:right;">$ 191,239</div>
<div class="a t " style="top:343px;font-size:13px;line-height:15px;color:#000;left:13px;width:400px;text-align:right;">$ 160,899</div>
<div class="a t " style="top:343px;font-size:13px;line-height:15px;color:#000;left:122px;width:400px;text-align:right;">$ 943,046</div>
<div class="a t " style="top:343px;font-size:13px;line-height:15px;color:#000;left:231px;width:400px;text-align:right;">$ 615,536</div>
<div class="a t " style="top:343px;font-size:13px;line-height:15px;color:#000;left:340px;width:400px;text-align:right;">$ 556,673</div>
<div class="a t " style="top:343px;font-size:13px;line-height:15px;color:#000;left:449px;width:400px;text-align:right;">$ 952,596</div>
<div class="a t " style="top:343px;font-size:13px;line-height:15px;color:#000;left:558px;width:400px;text-align:right;">$ 197,185</div>
<div class="a t " style="top:343px;font-size:13px;line-height:15px;color:#000;left:667px;width:400px;text-align:right;">$ 152,435</div>
<div class="a t " style="top:343px;font-size:13px;line-height:15px;color:#000;left:776px;width:400px;text-align:right;">$ 998,419</div>
<div class="a t " style="top:343px;font-size:13px;line-height:15px;color:#000;left:885px;width:400px;text-align:right;">$ 564,933</div>
<div class="a" style="left:1293px;top:340px;width:50px;height:19px;overflow:hidden;"><div class="a t" style="left:43px;top:3px;font-size:13px;line-height:15px;color:#000;">$ 1</div></div>
<div class="a t  fit" style="top:363px;font-size:13px;line-height:15px;color:#000;letter-spacing:0.37px;left:31.95px;">Wrench Kit</div>
<div class="a t " style="top:363px;font-size:13px;line-height:15px;color:#000;left:-96px;width:400px;text-align:right;">$ 355,220</div>
<div class="a t " style="top:363px;font-size:13px;line-height:15px;color:#000;left:13px;width:400px;text-align:right;">$ 678,372</div>
<div class="a t " style="top:363px;font-size:13px;line-height:15px;color:#000;left:122px;width:400px;text-align:right;">$ 475,865</div>
<div class="a t " style="top:363px;font-size:13px;line-height:15px;color:#000;left:231px;width:400px;text-align:right;">$ 269,153</div>
<div class="a t " style="top:363px;font-size:13px;line-height:15px;color:#000;left:340px;width:400px;text-align:right;">$ 806,407</div>
<div class="a t " style="top:363px;font-size:13px;line-height:15px;color:#000;left:449px;width:400px;text-align:right;">$ 511,262</div>
<div class="a t " style="top:363px;font-size:13px;line-height:15px;color:#000;left:558px;width:400px;text-align:right;">$ 822,992</div>
<div class="a t " style="top:363px;font-size:13px;line-height:15px;color:#000;left:667px;width:400px;text-align:right;">$ 216,912</div>
<div class="a t " style="top:363px;font-size:13px;line-height:15px;color:#000;left:776px;width:400px;text-align:right;">$ 962,666</div>
<div class="a t " style="top:363px;font-size:13px;line-height:15px;color:#000;left:885px;width:400px;text-align:right;">$ 430,439</div>
<div class="a" style="left:1293px;top:360px;width:50px;height:19px;overflow:hidden;"><div class="a t" style="left:43px;top:3px;font-size:13px;line-height:15px;color:#000;">$ 1</div></div>
<div class="a t  fit" style="top:383px;font-size:13px;line-height:15px;color:#000;letter-spacing:0.45px;left:30.7px;">Soldering Iron</div>
<div class="a t " style="top:383px;font-size:13px;line-height:15px;color:#000;left:-96px;width:400px;text-align:right;">$ 454,374</div>
<div class="a t " style="top:383px;font-size:13px;line-height:15px;color:#000;left:13px;width:400px;text-align:right;">$ 848,480</div>
<div class="a t " style="top:383px;font-size:13px;line-height:15px;color:#000;left:122px;width:400px;text-align:right;">$ 718,402</div>
<div class="a t " style="top:383px;font-size:13px;line-height:15px;color:#000;left:231px;width:400px;text-align:right;">$ 113,217</div>
<div class="a t " style="top:383px;font-size:13px;line-height:15px;color:#000;left:340px;width:400px;text-align:right;">$ 504,004</div>
<div class="a t " style="top:383px;font-size:13px;line-height:15px;color:#000;left:449px;width:400px;text-align:right;">$ 166,057</div>
<div class="a t " style="top:383px;font-size:13px;line-height:15px;color:#000;left:558px;width:400px;text-align:right;">$ 737,605</div>
<div class="a t " style="top:383px;font-size:13px;line-height:15px;color:#000;left:667px;width:400px;text-align:right;">$ 157,778</div>
<div class="a t " style="top:383px;font-size:13px;line-height:15px;color:#000;left:776px;width:400px;text-align:right;">$ 693,078</div>
<div class="a t " style="top:383px;font-size:13px;line-height:15px;color:#000;left:885px;width:400px;text-align:right;">$ 458,481</div>
<div class="a" style="left:1293px;top:380px;width:50px;height:19px;overflow:hidden;"><div class="a t" style="left:43px;top:3px;font-size:13px;line-height:15px;color:#000;">$ 1</div></div>
<div class="a t  fit" style="top:403px;font-size:13px;line-height:15px;color:#000;letter-spacing:0.17px;left:30.55px;">Open End Spanner</div>
<div class="a t " style="top:403px;font-size:13px;line-height:15px;color:#000;left:-96px;width:400px;text-align:right;">$ 880,694</div>
<div class="a t " style="top:403px;font-size:13px;line-height:15px;color:#000;left:13px;width:400px;text-align:right;">$ 213,256</div>
<div class="a t " style="top:403px;font-size:13px;line-height:15px;color:#000;left:122px;width:400px;text-align:right;">$ 466,204</div>
<div class="a t " style="top:403px;font-size:13px;line-height:15px;color:#000;left:231px;width:400px;text-align:right;">$ 406,284</div>
<div class="a t " style="top:403px;font-size:13px;line-height:15px;color:#000;left:340px;width:400px;text-align:right;">$ 117,036</div>
<div class="a t " style="top:403px;font-size:13px;line-height:15px;color:#000;left:449px;width:400px;text-align:right;">$ 258,944</div>
<div class="a t " style="top:403px;font-size:13px;line-height:15px;color:#000;left:558px;width:400px;text-align:right;">$ 203,381</div>
<div class="a t " style="top:403px;font-size:13px;line-height:15px;color:#000;left:667px;width:400px;text-align:right;">$ 867,423</div>
<div class="a t " style="top:403px;font-size:13px;line-height:15px;color:#000;left:776px;width:400px;text-align:right;">$ 811,663</div>
<div class="a t " style="top:403px;font-size:13px;line-height:15px;color:#000;left:885px;width:400px;text-align:right;">$ 865,265</div>
<div class="a" style="left:1293px;top:400px;width:50px;height:19px;overflow:hidden;"><div class="a t" style="left:43px;top:3px;font-size:13px;line-height:15px;color:#000;">$ 1</div></div>
<div class="a t  fit" style="top:423px;font-size:13px;line-height:15px;color:#000;letter-spacing:0.44px;left:31.8px;">Air Blower</div>
<div class="a t " style="top:423px;font-size:13px;line-height:15px;color:#000;left:-96px;width:400px;text-align:right;">$ 676,599</div>
<div class="a t " style="top:423px;font-size:13px;line-height:15px;color:#000;left:13px;width:400px;text-align:right;">$ 692,123</div>
<div class="a t " style="top:423px;font-size:13px;line-height:15px;color:#000;left:122px;width:400px;text-align:right;">$ 536,825</div>
<div class="a t " style="top:423px;font-size:13px;line-height:15px;color:#000;left:231px;width:400px;text-align:right;">$ 794,158</div>
<div class="a t " style="top:423px;font-size:13px;line-height:15px;color:#000;left:340px;width:400px;text-align:right;">$ 835,208</div>
<div class="a t " style="top:423px;font-size:13px;line-height:15px;color:#000;left:449px;width:400px;text-align:right;">$ 936,284</div>
<div class="a t " style="top:423px;font-size:13px;line-height:15px;color:#000;left:558px;width:400px;text-align:right;">$ 924,704</div>
<div class="a t " style="top:423px;font-size:13px;line-height:15px;color:#000;left:667px;width:400px;text-align:right;">$ 440,514</div>
<div class="a t " style="top:423px;font-size:13px;line-height:15px;color:#000;left:776px;width:400px;text-align:right;">$ 173,913</div>
<div class="a t " style="top:423px;font-size:13px;line-height:15px;color:#000;left:885px;width:400px;text-align:right;">$ 101,723</div>
<div class="a" style="left:1293px;top:420px;width:50px;height:19px;overflow:hidden;"><div class="a t" style="left:43px;top:3px;font-size:13px;line-height:15px;color:#000;">$ 1</div></div>
<div class="a t  fit" style="top:443px;font-size:13px;line-height:15px;color:#000;letter-spacing:0.21px;left:30.95px;">Hot Glue Gun</div>
<div class="a t " style="top:443px;font-size:13px;line-height:15px;color:#000;left:-96px;width:400px;text-align:right;">$ 300,558</div>
<div class="a t " style="top:443px;font-size:13px;line-height:15px;color:#000;left:13px;width:400px;text-align:right;">$ 640,534</div>
<div class="a t " style="top:443px;font-size:13px;line-height:15px;color:#000;left:122px;width:400px;text-align:right;">$ 525,718</div>
<div class="a t " style="top:443px;font-size:13px;line-height:15px;color:#000;left:231px;width:400px;text-align:right;">$ 804,576</div>
<div class="a t " style="top:443px;font-size:13px;line-height:15px;color:#000;left:340px;width:400px;text-align:right;">$ 491,835</div>
<div class="a t " style="top:443px;font-size:13px;line-height:15px;color:#000;left:449px;width:400px;text-align:right;">$ 765,018</div>
<div class="a t " style="top:443px;font-size:13px;line-height:15px;color:#000;left:558px;width:400px;text-align:right;">$ 315,226</div>
<div class="a t " style="top:443px;font-size:13px;line-height:15px;color:#000;left:667px;width:400px;text-align:right;">$ 350,067</div>
<div class="a t " style="top:443px;font-size:13px;line-height:15px;color:#000;left:776px;width:400px;text-align:right;">$ 474,145</div>
<div class="a t " style="top:443px;font-size:13px;line-height:15px;color:#000;left:885px;width:400px;text-align:right;">$ 686,756</div>
<div class="a" style="left:1293px;top:440px;width:50px;height:19px;overflow:hidden;"><div class="a t" style="left:43px;top:3px;font-size:13px;line-height:15px;color:#000;">$ 1</div></div>
<div class="a t  fit" style="top:463px;font-size:13px;line-height:15px;color:#000;letter-spacing:0.16px;left:30.6px;">Glue Sticks</div>
<div class="a t " style="top:463px;font-size:13px;line-height:15px;color:#000;left:-96px;width:400px;text-align:right;">$ 628,894</div>
<div class="a t " style="top:463px;font-size:13px;line-height:15px;color:#000;left:13px;width:400px;text-align:right;">$ 252,358</div>
<div class="a t " style="top:463px;font-size:13px;line-height:15px;color:#000;left:122px;width:400px;text-align:right;">$ 168,096</div>
<div class="a t " style="top:463px;font-size:13px;line-height:15px;color:#000;left:231px;width:400px;text-align:right;">$ 328,437</div>
<div class="a t " style="top:463px;font-size:13px;line-height:15px;color:#000;left:340px;width:400px;text-align:right;">$ 931,312</div>
<div class="a t " style="top:463px;font-size:13px;line-height:15px;color:#000;left:449px;width:400px;text-align:right;">$ 195,604</div>
<div class="a t " style="top:463px;font-size:13px;line-height:15px;color:#000;left:558px;width:400px;text-align:right;">$ 550,578</div>
<div class="a t " style="top:463px;font-size:13px;line-height:15px;color:#000;left:667px;width:400px;text-align:right;">$ 350,395</div>
<div class="a t " style="top:463px;font-size:13px;line-height:15px;color:#000;left:776px;width:400px;text-align:right;">$ 204,196</div>
<div class="a t " style="top:463px;font-size:13px;line-height:15px;color:#000;left:885px;width:400px;text-align:right;">$ 372,460</div>
<div class="a" style="left:1293px;top:460px;width:50px;height:19px;overflow:hidden;"><div class="a t" style="left:43px;top:3px;font-size:13px;line-height:15px;color:#000;">$ 1</div></div>
<div class="a t  fit" style="top:483px;font-size:13px;line-height:15px;color:#000;letter-spacing:0.19px;left:30.85px;">Spanner Head</div>
<div class="a t " style="top:483px;font-size:13px;line-height:15px;color:#000;left:-96px;width:400px;text-align:right;">$ 561,717</div>
<div class="a t " style="top:483px;font-size:13px;line-height:15px;color:#000;left:13px;width:400px;text-align:right;">$ 247,918</div>
<div class="a t " style="top:483px;font-size:13px;line-height:15px;color:#000;left:122px;width:400px;text-align:right;">$ 777,798</div>
<div class="a t " style="top:483px;font-size:13px;line-height:15px;color:#000;left:231px;width:400px;text-align:right;">$ 232,484</div>
<div class="a t " style="top:483px;font-size:13px;line-height:15px;color:#000;left:340px;width:400px;text-align:right;">$ 592,732</div>
<div class="a t " style="top:483px;font-size:13px;line-height:15px;color:#000;left:449px;width:400px;text-align:right;">$   98,052</div>
<div class="a t " style="top:483px;font-size:13px;line-height:15px;color:#000;left:558px;width:400px;text-align:right;">$ 611,837</div>
<div class="a t " style="top:483px;font-size:13px;line-height:15px;color:#000;left:667px;width:400px;text-align:right;">$ 592,184</div>
<div class="a t " style="top:483px;font-size:13px;line-height:15px;color:#000;left:776px;width:400px;text-align:right;">$ 180,309</div>
<div class="a t " style="top:483px;font-size:13px;line-height:15px;color:#000;left:885px;width:400px;text-align:right;">$ 694,908</div>
<div class="a" style="left:1293px;top:480px;width:50px;height:19px;overflow:hidden;"><div class="a t" style="left:43px;top:3px;font-size:13px;line-height:15px;color:#000;">$ 1</div></div>
<div class="a t  fit" style="top:503px;font-size:13px;line-height:15px;color:#000;letter-spacing:0.6px;left:30.45px;">Drill Machine</div>
<div class="a t " style="top:503px;font-size:13px;line-height:15px;color:#000;left:-96px;width:400px;text-align:right;">$ 824,033</div>
<div class="a t " style="top:503px;font-size:13px;line-height:15px;color:#000;left:13px;width:400px;text-align:right;">$ 682,311</div>
<div class="a t " style="top:503px;font-size:13px;line-height:15px;color:#000;left:122px;width:400px;text-align:right;">$ 302,129</div>
<div class="a t " style="top:503px;font-size:13px;line-height:15px;color:#000;left:231px;width:400px;text-align:right;">$ 962,943</div>
<div class="a t " style="top:503px;font-size:13px;line-height:15px;color:#000;left:340px;width:400px;text-align:right;">$ 768,955</div>
<div class="a t " style="top:503px;font-size:13px;line-height:15px;color:#000;left:449px;width:400px;text-align:right;">$ 679,043</div>
<div class="a t " style="top:503px;font-size:13px;line-height:15px;color:#000;left:558px;width:400px;text-align:right;">$ 692,159</div>
<div class="a t " style="top:503px;font-size:13px;line-height:15px;color:#000;left:667px;width:400px;text-align:right;">$ 170,314</div>
<div class="a t " style="top:503px;font-size:13px;line-height:15px;color:#000;left:776px;width:400px;text-align:right;">$ 527,203</div>
<div class="a t " style="top:503px;font-size:13px;line-height:15px;color:#000;left:885px;width:400px;text-align:right;">$   88,251</div>
<div class="a" style="left:1293px;top:500px;width:50px;height:19px;overflow:hidden;"><div class="a t" style="left:43px;top:3px;font-size:13px;line-height:15px;color:#000;">$ 1</div></div>
<div class="a t  fit" style="top:523px;font-size:13px;line-height:15px;color:#000;letter-spacing:0.26px;left:31.5px;">Weighing Scale</div>
<div class="a t " style="top:523px;font-size:13px;line-height:15px;color:#000;left:-96px;width:400px;text-align:right;">$ 888,109</div>
<div class="a t " style="top:523px;font-size:13px;line-height:15px;color:#000;left:13px;width:400px;text-align:right;">$ 540,483</div>
<div class="a t " style="top:523px;font-size:13px;line-height:15px;color:#000;left:122px;width:400px;text-align:right;">$ 820,442</div>
<div class="a t " style="top:523px;font-size:13px;line-height:15px;color:#000;left:231px;width:400px;text-align:right;">$ 792,253</div>
<div class="a t " style="top:523px;font-size:13px;line-height:15px;color:#000;left:340px;width:400px;text-align:right;">$ 642,745</div>
<div class="a t " style="top:523px;font-size:13px;line-height:15px;color:#000;left:449px;width:400px;text-align:right;">$ 220,425</div>
<div class="a t " style="top:523px;font-size:13px;line-height:15px;color:#000;left:558px;width:400px;text-align:right;">$ 214,309</div>
<div class="a t " style="top:523px;font-size:13px;line-height:15px;color:#000;left:667px;width:400px;text-align:right;">$ 670,516</div>
<div class="a t " style="top:523px;font-size:13px;line-height:15px;color:#000;left:776px;width:400px;text-align:right;">$ 199,721</div>
<div class="a t " style="top:523px;font-size:13px;line-height:15px;color:#000;left:885px;width:400px;text-align:right;">$ 335,409</div>
<div class="a" style="left:1293px;top:520px;width:50px;height:19px;overflow:hidden;"><div class="a t" style="left:43px;top:3px;font-size:13px;line-height:15px;color:#000;">$ 1</div></div>
<div class="a t  fit" style="top:543px;font-size:13px;line-height:15px;color:#000;letter-spacing:0.41px;left:31.0px;">Digital Line Tester</div>
<div class="a t " style="top:543px;font-size:13px;line-height:15px;color:#000;left:-96px;width:400px;text-align:right;">$ 869,498</div>
<div class="a t " style="top:543px;font-size:13px;line-height:15px;color:#000;left:13px;width:400px;text-align:right;">$ 320,305</div>
<div class="a t " style="top:543px;font-size:13px;line-height:15px;color:#000;left:122px;width:400px;text-align:right;">$ 530,981</div>
<div class="a t " style="top:543px;font-size:13px;line-height:15px;color:#000;left:231px;width:400px;text-align:right;">$ 282,790</div>
<div class="a t " style="top:543px;font-size:13px;line-height:15px;color:#000;left:340px;width:400px;text-align:right;">$ 298,390</div>
<div class="a t " style="top:543px;font-size:13px;line-height:15px;color:#000;left:449px;width:400px;text-align:right;">$ 358,506</div>
<div class="a t " style="top:543px;font-size:13px;line-height:15px;color:#000;left:558px;width:400px;text-align:right;">$ 845,484</div>
<div class="a t " style="top:543px;font-size:13px;line-height:15px;color:#000;left:667px;width:400px;text-align:right;">$ 895,902</div>
<div class="a t " style="top:543px;font-size:13px;line-height:15px;color:#000;left:776px;width:400px;text-align:right;">$ 437,928</div>
<div class="a t " style="top:543px;font-size:13px;line-height:15px;color:#000;left:885px;width:400px;text-align:right;">$ 252,784</div>
<div class="a" style="left:1293px;top:540px;width:50px;height:19px;overflow:hidden;"><div class="a t" style="left:43px;top:3px;font-size:13px;line-height:15px;color:#000;">$ 1</div></div>
<div class="a t " style="top:563px;font-size:13px;line-height:15px;color:#000;left:31px;">Screwdriver</div>
<div class="a t " style="top:563px;font-size:13px;line-height:15px;color:#000;left:-96px;width:400px;text-align:right;">$ 745,312</div>
<div class="a t " style="top:563px;font-size:13px;line-height:15px;color:#000;left:13px;width:400px;text-align:right;">$ 418,967</div>
<div class="a t " style="top:563px;font-size:13px;line-height:15px;color:#000;left:122px;width:400px;text-align:right;">$ 263,508</div>
<div class="a t " style="top:563px;font-size:13px;line-height:15px;color:#000;left:231px;width:400px;text-align:right;">$ 951,246</div>
<div class="a t " style="top:563px;font-size:13px;line-height:15px;color:#000;left:340px;width:400px;text-align:right;">$ 387,125</div>
<div class="a t " style="top:563px;font-size:13px;line-height:15px;color:#000;left:449px;width:400px;text-align:right;">$ 604,873</div>
<div class="a t " style="top:563px;font-size:13px;line-height:15px;color:#000;left:558px;width:400px;text-align:right;">$ 129,456</div>
<div class="a t " style="top:563px;font-size:13px;line-height:15px;color:#000;left:667px;width:400px;text-align:right;">$ 783,690</div>
<div class="a t " style="top:563px;font-size:13px;line-height:15px;color:#000;left:776px;width:400px;text-align:right;">$ 546,231</div>
<div class="a t " style="top:563px;font-size:13px;line-height:15px;color:#000;left:885px;width:400px;text-align:right;">$ 912,078</div>
<div class="a" style="left:1343px;top:221px;width:23px;height:345px;background:#e6e6e6;"></div>
<div class="a" style="left:1343px;top:241px;width:4px;height:325px;background:linear-gradient(to right,#cdcdcd,#e6e6e6);"></div>
<div class="a" style="left:1347px;top:238px;width:15px;height:328px;background:#dcdcdc;"></div>
<div class="a" style="left:1347px;top:223px;width:15px;height:15px;background:#fff;border:1px solid #c8c8c8;"></div>
<svg class="a" style="left:1351px;top:228px;" width="7" height="4" viewBox="0 0 7 4"><path d="M0 4h7L3.5 0z" fill="#808080"/></svg>
<div class="a" style="left:1347px;top:238px;width:15px;height:175px;background:#fff;border:1px solid #c4c4c4;"></div>
<div class="a" style="left:1364px;top:62px;width:1px;height:504px;background:#f3eff1;"></div>
<div class="a" style="left:1365px;top:62px;width:1px;height:504px;background:#217346;"></div>
</body></html>
